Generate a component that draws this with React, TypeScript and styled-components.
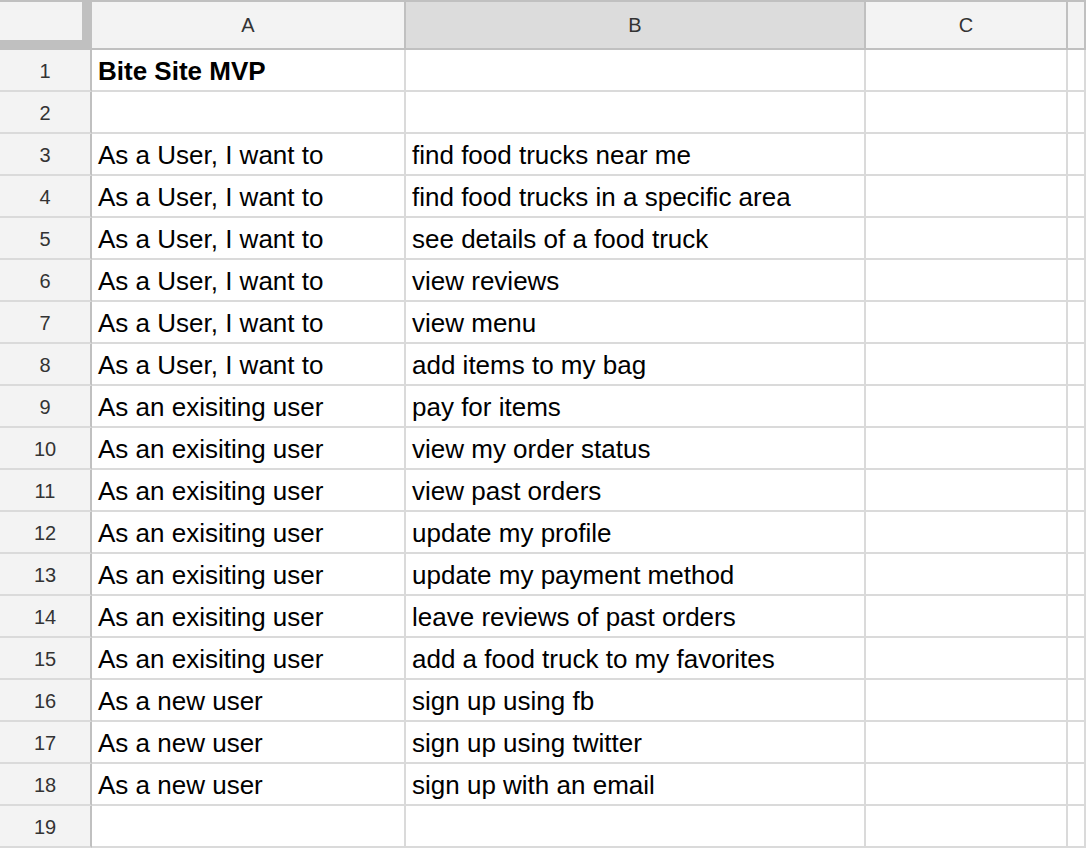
import { createGlobalStyle } from "styled-components";
import styled from "styled-components";

const GlobalStyle = createGlobalStyle`
  html, body {
    margin: 0;
    padding: 0;
    background: #ffffff;
    overflow: hidden;
  }
  body {
    font-family: "Liberation Sans", Arial, sans-serif;
  }
`;

const rows: [string, string][] = [
  ["", ""],
  ["As a User, I want to", "find food trucks near me"],
  ["As a User, I want to", "find food trucks in a specific area"],
  ["As a User, I want to", "see details of a food truck"],
  ["As a User, I want to", "view reviews"],
  ["As a User, I want to", "view menu"],
  ["As a User, I want to", "add items to my bag"],
  ["As an exisiting user", "pay for items"],
  ["As an exisiting user", "view my order status"],
  ["As an exisiting user", "view past orders"],
  ["As an exisiting user", "update my profile"],
  ["As an exisiting user", "update my payment method"],
  ["As an exisiting user", "leave reviews of past orders"],
  ["As an exisiting user", "add a food truck to my favorites"],
  ["As a new user", "sign up using fb"],
  ["As a new user", "sign up using twitter"],
  ["As a new user", "sign up with an email"],
  ["", ""],
];

const Sheet = styled.div`
  display: grid;
  grid-template-columns: 92px 314px 460px 202px 1fr;
  grid-auto-rows: 42px;
  grid-template-rows: 50px;
  width: 1086px;
`;

const Corner = styled.div`
  background: #c0c0c0;
  border-top: 2px solid #c0c0c0;
  display: flex;
  align-items: flex-start;
  > div {
    width: 82px;
    height: 38px;
    background: #f3f3f3;
  }
`;

const ColHead = styled.div<{ $selected?: boolean }>`
  box-sizing: border-box;
  background: ${(p) => (p.$selected ? "#dcdcdc" : "#f3f3f3")};
  border-top: 2px solid #c0c0c0;
  border-bottom: 2px solid #c0c0c0;
  border-right: 2px solid #c0c0c0;
  display: flex;
  align-items: center;
  justify-content: center;
  font-size: 20px;
  color: #333333;
`;

const RowHead = styled.div`
  box-sizing: border-box;
  background: #f3f3f3;
  border-right: 2px solid #c0c0c0;
  border-bottom: 2px solid #dadada;
  display: flex;
  align-items: center;
  justify-content: center;
  padding-top: 2px;
  font-size: 20px;
  color: #333333;
`;

const Cell = styled.div<{ $bold?: boolean }>`
  box-sizing: border-box;
  border-right: 2px solid #dadada;
  border-bottom: 2px solid #dadada;
  display: flex;
  align-items: center;
  padding: 2px 6px 0;
  font-size: 26px;
  font-weight: ${(p) => (p.$bold ? 700 : 400)};
  color: #000000;
  white-space: nowrap;
  overflow: hidden;
`;

export default function App() {
  return (
    <>
      <GlobalStyle />
      <Sheet>
        <Corner>
          <div />
        </Corner>
        <ColHead>A</ColHead>
        <ColHead $selected>B</ColHead>
        <ColHead>C</ColHead>
        <ColHead />

        <RowHead>1</RowHead>
        <Cell $bold>Bite Site MVP</Cell>
        <Cell />
        <Cell />
        <Cell />

        {rows.map(([a, b], i) => (
          <Row key={i} n={i + 2} a={a} b={b} />
        ))}
      </Sheet>
    </>
  );
}

const Row: React.FC<{ n: number; a: string; b: string }> = ({ n, a, b }) => (
  <>
    <RowHead>{n}</RowHead>
    <Cell>{a}</Cell>
    <Cell>{b}</Cell>
    <Cell />
    <Cell />
  </>
);
